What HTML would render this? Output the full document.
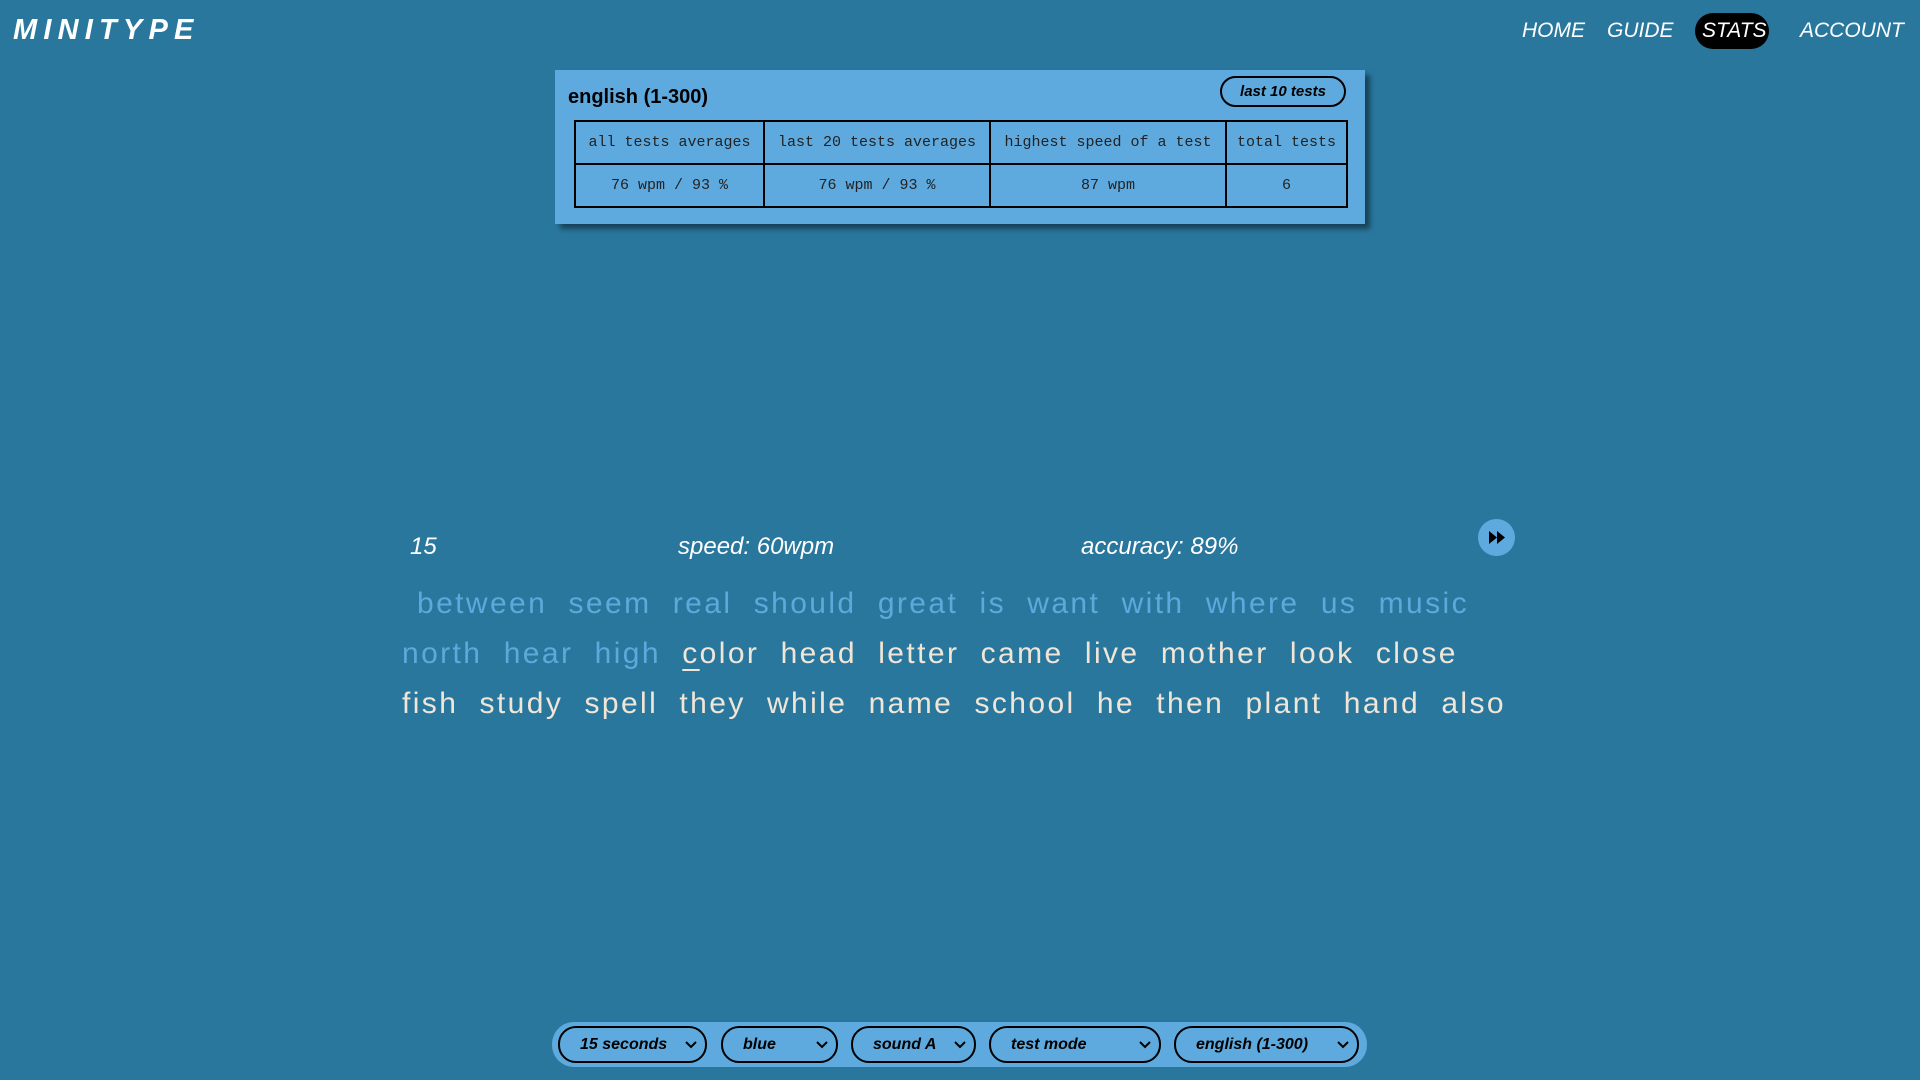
<!DOCTYPE html>
<html><head><meta charset="utf-8"><style>
*{margin:0;padding:0;box-sizing:border-box}
body{width:1920px;height:1080px;background:#2a779e;font-family:"Liberation Sans",sans-serif;position:relative;overflow:hidden;color:#fff}
.abs{position:absolute}
.logo{left:13px;top:14px;font-size:29px;font-weight:bold;font-style:italic;letter-spacing:6.2px}
.nav{top:19px;font-size:21px;font-style:italic}
.pill{background:#000;border-radius:18px;left:1695px;top:13px;width:74px;height:36px}
.panel{left:555px;top:70px;width:810px;height:154px;background:#5eaade;box-shadow:5px 5px 5px rgba(0,0,0,.45)}
.title{left:13px;top:16px;font-size:20px;font-weight:bold;color:#000}
.btn{left:665px;top:6px;width:126px;height:31px;border:2px solid #000;border-radius:16px;color:#000;font-style:italic;font-weight:bold;font-size:15px;text-align:center;line-height:27px}
table{position:absolute;left:19px;top:50px;border-collapse:collapse;font-family:"Liberation Mono",monospace;color:#222;font-size:15px}
td{border:2px solid #000;text-align:center;height:43px;padding:0}
.st{top:533px;font-size:24px;font-style:italic}
.skip{left:1478px;top:519px;width:37px;height:37px;border-radius:50%;background:#5eaade}
.line{position:absolute;display:flex;justify-content:space-between;font-size:30px;letter-spacing:2.4px;color:#efe6d8}
.t{color:#5ea8dc}
.u{text-decoration:underline;text-underline-offset:6px;text-decoration-thickness:2px}
.bar{left:552px;top:1022px;width:815px;height:45px;background:#5eaade;border-radius:22px}
.sel{position:absolute;top:4px;height:37px;border:2px solid #000;border-radius:18px;color:#000;font-size:16px;font-style:italic;font-weight:bold;line-height:33px;padding-left:20px}
.sel svg{position:absolute;right:8px;top:12px}
</style></head><body>
<div class="abs logo">MINITYPE</div>
<div class="abs nav" style="left:1522px">HOME</div>
<div class="abs nav" style="left:1607px">GUIDE</div>
<div class="abs pill"></div>
<div class="abs nav" style="left:1702px">STATS</div>
<div class="abs nav" style="left:1800px">ACCOUNT</div>

<div class="abs panel">
<div class="abs title">english (1-300)</div>
<div class="abs btn">last 10 tests</div>
<table>
<tr><td style="width:189px">all tests averages</td><td style="width:226px">last 20 tests averages</td><td style="width:236px">highest speed of a test</td><td style="width:121px">total tests</td></tr>
<tr><td>76 wpm / 93 %</td><td>76 wpm / 93 %</td><td>87 wpm</td><td>6</td></tr>
</table>
</div>

<div class="abs st" style="left:410px">15</div>
<div class="abs st" style="left:678px">speed: 60wpm</div>
<div class="abs st" style="left:1081px">accuracy: 89%</div>
<div class="abs skip"><svg width="37" height="37" viewBox="0 0 37 37"><path d="M11 12l8 6.5-8 6.5zM19 12l8 6.5-8 6.5z" fill="#000"/></svg></div>

<div class="line t" style="left:417px;top:587px;width:1052px"><span>between</span><span>seem</span><span>real</span><span>should</span><span>great</span><span>is</span><span>want</span><span>with</span><span>where</span><span>us</span><span>music</span></div>
<div class="line" style="left:402px;top:637px;width:1056px"><span class="t">north</span><span class="t">hear</span><span class="t">high</span><span><span class="u">c</span>olor</span><span>head</span><span>letter</span><span>came</span><span>live</span><span>mother</span><span>look</span><span>close</span></div>
<div class="line" style="left:402px;top:687px;width:1104px"><span>fish</span><span>study</span><span>spell</span><span>they</span><span>while</span><span>name</span><span>school</span><span>he</span><span>then</span><span>plant</span><span>hand</span><span>also</span></div>

<div class="abs bar">
<div class="sel" style="left:6px;width:149px">15 seconds<svg width="12" height="10"><path d="M1 2l5 5 5-5" stroke="#000" stroke-width="2" fill="none"/></svg></div>
<div class="sel" style="left:169px;width:117px">blue<svg width="12" height="10"><path d="M1 2l5 5 5-5" stroke="#000" stroke-width="2" fill="none"/></svg></div>
<div class="sel" style="left:299px;width:125px">sound A<svg width="12" height="10"><path d="M1 2l5 5 5-5" stroke="#000" stroke-width="2" fill="none"/></svg></div>
<div class="sel" style="left:437px;width:172px">test mode<svg width="12" height="10"><path d="M1 2l5 5 5-5" stroke="#000" stroke-width="2" fill="none"/></svg></div>
<div class="sel" style="left:622px;width:185px">english (1-300)<svg width="12" height="10"><path d="M1 2l5 5 5-5" stroke="#000" stroke-width="2" fill="none"/></svg></div>
</div>
</body></html>
